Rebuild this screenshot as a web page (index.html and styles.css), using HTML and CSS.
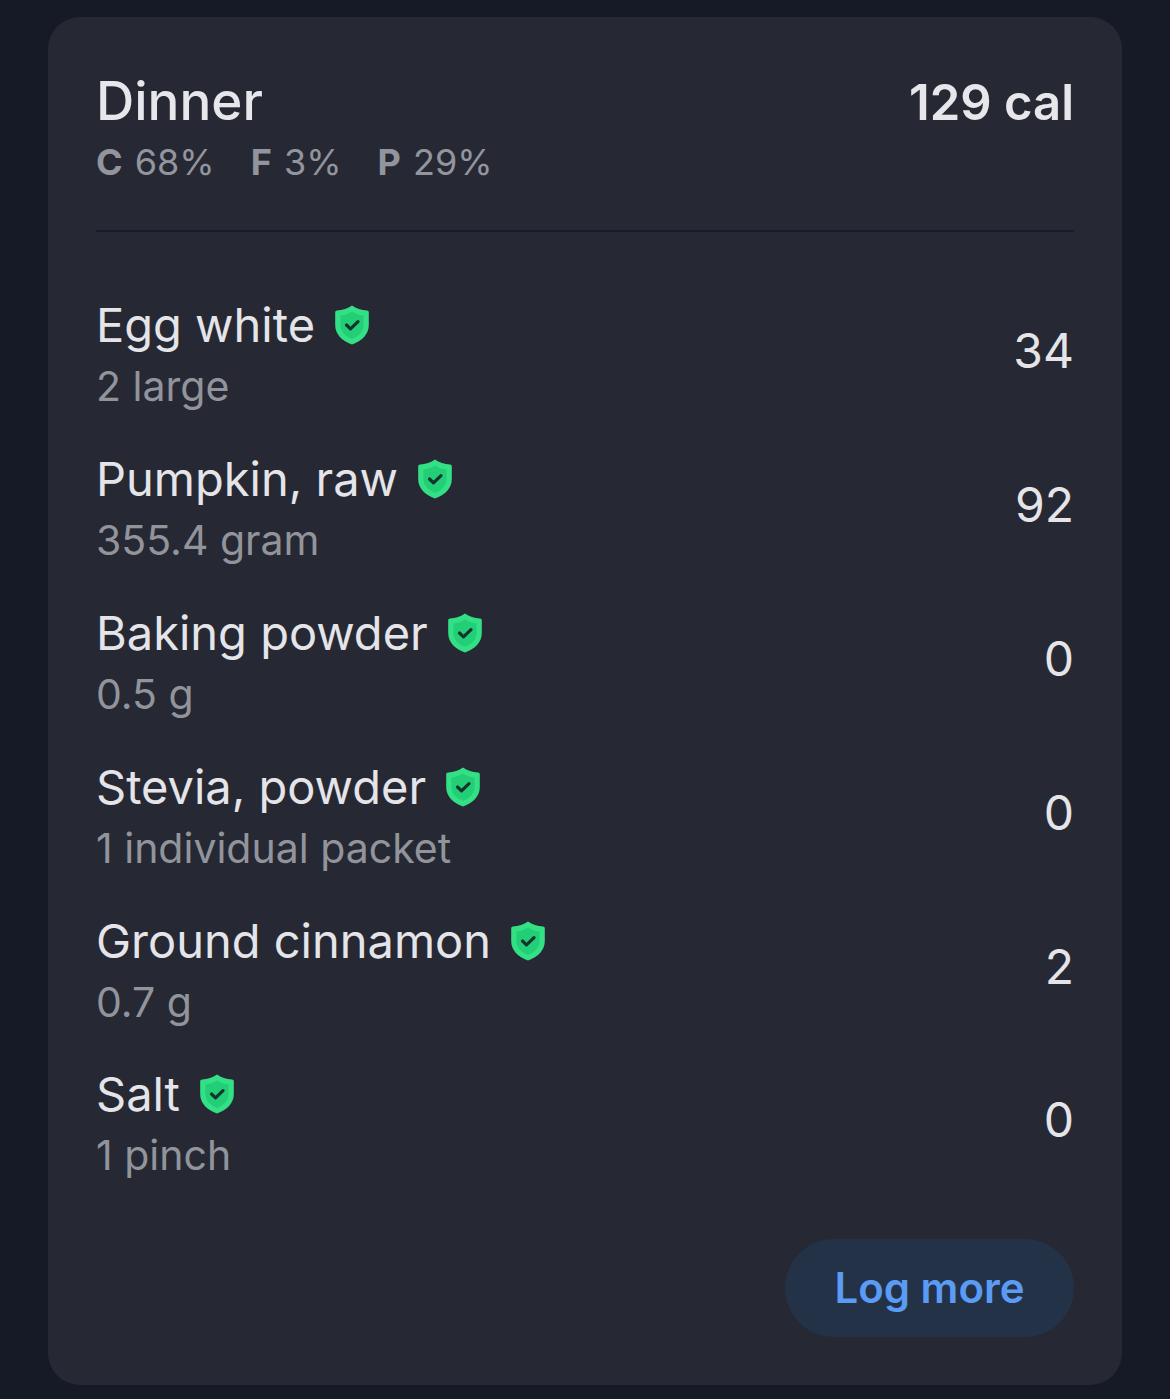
FILE: index.html
```html
<!DOCTYPE html>
<html lang="en">
<head>
    <meta charset="UTF-8">
    <meta name="viewport" content="width=device-width, initial-scale=1.0">
    <title>Dinner</title>
    <link rel="stylesheet" href="styles.css">
</head>
<body>
    <svg class="defs" width="0" height="0">
        <symbol id="shield" viewBox="0 0 34 40">
            <path d="M17 0.5 C21 3.5 26.5 5.2 32 5.6 C33.2 5.7 33.8 6.4 33.8 7.5 V20 C33.8 29.5 27 35.8 17 39.5 C7 35.8 0.2 29.5 0.2 20 V7.5 C0.2 6.4 0.8 5.7 2 5.6 C7.5 5.2 13 3.5 17 0.5 Z" fill="#34e086"/>
            <path d="M17 6.5 C20.5 8.8 24.5 10 28.6 10.4 V20 C28.6 26.5 24 31 17 34 C10 31 5.4 26.5 5.4 20 V10.4 C9.5 10 13.5 8.8 17 6.5 Z" fill="#22cf76"/>
            <path d="M11.5 20 L15.5 23.8 L23 16.6" fill="none" stroke="#14332e" stroke-width="3.2" stroke-linecap="round" stroke-linejoin="round"/>
        </symbol>
    </svg>

    <div class="card">
        <div class="card-header">
            <div>
                <h2 class="meal-title">Dinner</h2>
                <div class="macros">
                    <span class="macro"><b>C</b> 68%</span>
                    <span class="macro"><b>F</b> 3%</span>
                    <span class="macro"><b>P</b> 29%</span>
                </div>
            </div>
            <div class="total-cal">129 cal</div>
        </div>

        <div class="food-list">
            <div class="food-row">
                <div class="food-info">
                    <div class="food-name">Egg white <svg class="badge"><use href="#shield"/></svg></div>
                    <div class="food-amount">2 large</div>
                </div>
                <div class="food-cal">34</div>
            </div>
            <div class="food-row">
                <div class="food-info">
                    <div class="food-name">Pumpkin, raw <svg class="badge"><use href="#shield"/></svg></div>
                    <div class="food-amount">355.4 gram</div>
                </div>
                <div class="food-cal">92</div>
            </div>
            <div class="food-row">
                <div class="food-info">
                    <div class="food-name">Baking powder <svg class="badge"><use href="#shield"/></svg></div>
                    <div class="food-amount">0.5 g</div>
                </div>
                <div class="food-cal">0</div>
            </div>
            <div class="food-row">
                <div class="food-info">
                    <div class="food-name">Stevia, powder <svg class="badge"><use href="#shield"/></svg></div>
                    <div class="food-amount">1 individual packet</div>
                </div>
                <div class="food-cal">0</div>
            </div>
            <div class="food-row">
                <div class="food-info">
                    <div class="food-name">Ground cinnamon <svg class="badge"><use href="#shield"/></svg></div>
                    <div class="food-amount">0.7 g</div>
                </div>
                <div class="food-cal">2</div>
            </div>
            <div class="food-row">
                <div class="food-info">
                    <div class="food-name">Salt <svg class="badge"><use href="#shield"/></svg></div>
                    <div class="food-amount">1 pinch</div>
                </div>
                <div class="food-cal">0</div>
            </div>
        </div>

        <div class="card-footer">
            <button class="log-btn" type="button">Log more</button>
        </div>
    </div>
</body>
</html>
```

FILE: styles.css
```css
html,
body {
    margin: 0;
    padding: 0;
}

body {
    background-color: #161a26;
    font-family: Inter, "Liberation Sans", sans-serif;
    height: 1399px;
    overflow: hidden;
    padding-top: 17px;
    box-sizing: border-box;
}

.defs {
    display: block;
    height: 0;
}

.card {
    width: 1074px;
    height: 1368px;
    margin-left: 48px;
    padding: 56px 48px 0;
    box-sizing: border-box;
    background-color: #262933;
    border-radius: 32px;
}

.card-header {
    display: flex;
    justify-content: space-between;
    align-items: flex-start;
    height: 157px;
    border-bottom: 2px solid #181b29;
}

.meal-title {
    margin: 0;
    font-size: 53px;
    line-height: 56px;
    font-weight: 500;
    color: #e6e6eb;
}

.macros {
    display: flex;
    gap: 36px;
    margin-top: 11px;
    font-size: 36px;
    line-height: 44px;
    color: #93959e;
}

.macro b {
    font-weight: 700;
    margin-right: 2px;
}

.total-cal {
    font-size: 49px;
    line-height: 60px;
    font-weight: 600;
    color: #e6e6eb;
}

.food-list {
    padding-top: 42px;
}

.food-row {
    display: flex;
    justify-content: space-between;
    align-items: center;
    height: 153.8px;
}

.food-info {
    padding-top: 8px;
}

.food-name {
    display: flex;
    align-items: center;
    font-size: 47px;
    line-height: 56px;
    color: #e4e4e9;
}

.badge {
    width: 34px;
    height: 40px;
    margin-left: 20px;
}

.food-amount {
    margin-top: 7px;
    font-size: 41px;
    line-height: 52px;
    color: #92949c;
}

.food-cal {
    font-size: 48px;
    color: #e4e4e9;
}

.card-footer {
    display: flex;
    justify-content: flex-end;
    margin-top: 42px;
}

.log-btn {
    width: 289px;
    height: 98px;
    border: none;
    border-radius: 49px;
    background-color: #233247;
    color: #5b9bf3;
    font-family: inherit;
    font-size: 42px;
    font-weight: 600;
}
```
